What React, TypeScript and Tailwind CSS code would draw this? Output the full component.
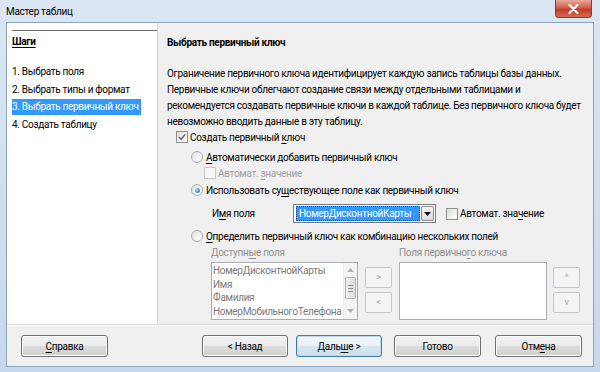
import React from 'react';

const U = ({ children }: { children: React.ReactNode }) => <span className="underline underline-offset-2">{children}</span>;

const btnBg = 'bg-[linear-gradient(to_bottom,#f2f2f2_0%,#ebebeb_50%,#dddddd_50%,#cfcfcf_100%)]';

const Checkbox = ({ checked, disabled }: { checked?: boolean; disabled?: boolean }) => (
    <span
        className={`flex w-[12px] h-[12px] shrink-0 items-center justify-center border ${disabled ? 'border-[#c8c8c8] bg-[#f6f6f6]' : 'border-[#8e8f8f] bg-[linear-gradient(135deg,#dcdcdc,#ffffff)]'}`}
    >
        {checked && (
            <svg width="8" height="8" viewBox="0 0 9 9">
                <path d="M1 4.5 L3.5 7 L8 1.5" fill="none" stroke="#5a6470" strokeWidth="1.6" />
            </svg>
        )}
    </span>
);

const Radio = ({ checked }: { checked?: boolean }) => (
    <span className="flex w-[12px] h-[12px] shrink-0 items-center justify-center rounded-full border border-[#a7abb0] bg-[linear-gradient(135deg,#e2e2e2,#ffffff)]">
        {checked && <span className="w-[5px] h-[5px] rounded-full bg-[radial-gradient(circle_at_35%_35%,#a8dbf8,#1d5fa8)]" />}
    </span>
);

const Button = ({ children, w, focused, className = '' }: { children: React.ReactNode; w: string; focused?: boolean; className?: string }) => (
    <div
        className={`${w} h-[22px] flex items-center justify-center rounded-[3px] border ${focused ? 'border-[#3c7fb1] bg-[linear-gradient(to_bottom,#f4f9fd_0%,#e8f2f9_50%,#d7e6f1_50%,#cfe0ec_100%)] shadow-[inset_0_0_0_1px_#b9dcf2]' : `border-[#707070] ${btnBg} shadow-[inset_0_0_0_1px_#fcfcfc]`} ${className}`}
    >
        {children}
    </div>
);

const SmallBtn = ({ children }: { children: React.ReactNode }) => (
    <div className="w-[27px] h-[21px] flex items-center justify-center rounded-[2px] border border-[#c5c8cb] bg-[#f4f4f4] text-[9px] text-[#a8a8a8]">
        {children}
    </div>
);

export default function App() {
    const steps = ['1. Выбрать поля', '2. Выбрать типы и формат', '3. Выбрать первичный ключ', '4. Создать таблицу'];

    return (
        <div
            className="w-[600px] h-[372px] flex flex-col bg-[linear-gradient(to_bottom,#dae6f3,#c6d8ec)] text-[10px] tracking-[-0.3px] text-black overflow-hidden"
            style={{ fontFamily: 'Roboto, "Noto Sans", sans-serif' }}
        >
            {/* title bar */}
            <div className="h-[22px] flex items-start">
                <div className="pl-[6px] pt-[4px] leading-[16px]">Мастер таблиц</div>
                <div className="ml-auto mr-[8px] w-[37px] h-[18px] flex items-center justify-center rounded-b-[4px] border border-t-0 border-[#8a3b32] bg-[linear-gradient(to_bottom,#e9a99a_0%,#d1604c_45%,#c13b28_55%,#d26b4f_100%)]">
                    <svg width="11" height="10" viewBox="0 0 11 10">
                        <path d="M1.5 1 L9.5 9 M9.5 1 L1.5 9" stroke="#ffffff" strokeWidth="2.2" strokeLinecap="round" />
                    </svg>
                </div>
            </div>

            {/* client */}
            <div className="mx-[6px] mb-[5px] flex-1 flex flex-col border border-[#8ea3bd] bg-[#f0f0f0]">
                <div className="h-[302px] flex border-b border-[#dadada]">
                    {/* steps */}
                    <div className="w-[151px] shrink-0 bg-white border-r border-[#d5d5d5] pl-[5px] pt-[7px]">
                        <div className="border-t border-[#6a6a6a]" />
                        <div className="mt-[3px] leading-[16px] font-bold">
                            <span className="underline underline-offset-2">Шаги</span>
                        </div>
                        <div className="mt-[13px] flex flex-col whitespace-nowrap">
                            {steps.map((s, i) => (
                                <div key={s} className="h-[17.7px] flex items-center">
                                    <span className={`leading-[16px] ${i === 2 ? 'bg-[#3399ff] text-white pr-[2px]' : ''}`}>{s}</span>
                                </div>
                            ))}
                        </div>
                    </div>

                    {/* page */}
                    <div className="flex-1 pl-[9px] pt-[12px]">
                        <div className="leading-[16px] font-bold">Выбрать первичный ключ</div>
                        <div className="mt-[15px] leading-[16px] whitespace-nowrap">
                            Ограничение первичного ключа идентифицирует каждую запись таблицы базы данных.<br />
                            Первичные ключи облегчают создание связи между отдельными таблицами и<br />
                            рекомендуется создавать первичные ключи в каждой таблице. Без первичного ключа будет<br />
                            невозможно вводить данные в эту таблицу.
                        </div>

                        <div className="mt-[-1px] pl-[9px] h-[16px] flex items-center gap-[2px]">
                            <Checkbox checked />
                            <span>Создать первичный <U>к</U>люч</span>
                        </div>
                        <div className="mt-[4px] pl-[24px] h-[16px] flex items-center gap-[3px]">
                            <Radio />
                            <span><U>А</U>втоматически добавить первичный ключ</span>
                        </div>
                        <div className="pl-[37px] h-[16px] flex items-center gap-[2px] text-[#a0a0a0]">
                            <Checkbox disabled />
                            <span>Автомат. <U>з</U>начение</span>
                        </div>
                        <div className="mt-[1px] pl-[24px] h-[16px] flex items-center gap-[3px]">
                            <Radio checked />
                            <span>Использовать су<U>щ</U>ествующее поле как первичный ключ</span>
                        </div>
                        <div className="mt-[6px] pl-[45px] h-[19px] flex items-center">
                            <span className="w-[81px]">И<U>м</U>я поля</span>
                            <div className="w-[143px] h-[19px] flex items-center border border-[#7a7a7a] bg-white pl-[2px] pr-[1px]">
                                <div className="flex-1 h-[15px] flex items-center bg-[#3399ff] text-white pl-[3px] outline outline-1 outline-dotted outline-[#1a4f8a] -outline-offset-1">
                                    НомерДисконтнойКарты
                                </div>
                                <div className="ml-[1px] w-[13px] h-[15px] flex items-center justify-center border border-[#8a8a8a] rounded-[2px] bg-[linear-gradient(to_bottom,#f4f4f4,#dcdcdc)]">
                                    <svg width="7" height="4" viewBox="0 0 7 4">
                                        <path d="M0 0 H7 L3.5 4 Z" fill="#000" />
                                    </svg>
                                </div>
                            </div>
                            <div className="ml-[10px] flex items-center gap-[2px]">
                                <Checkbox />
                                <span>Автомат. зна<U>ч</U>ение</span>
                            </div>
                        </div>
                        <div className="mt-[5px] pl-[24px] h-[16px] flex items-center gap-[3px]">
                            <Radio />
                            <span><U>О</U>пределить первичный ключ как комбинацию нескольких полей</span>
                        </div>

                        <div className="mt-[1px] pl-[44px] flex text-[#8f8f8f]">
                            <div className="flex flex-col">
                                <div className="h-[16px] leading-[16px]">Доступн<U>ы</U>е поля</div>
                                <div className="mt-[1px] flex">
                                    <div className="w-[147px] h-[58px] flex border border-[#a9adb3] bg-white">
                                        <div className="flex-1 pl-[1px] pt-[1px] leading-[13.7px] text-[#7a7a7a] overflow-hidden whitespace-nowrap">
                                            <div>НомерДисконтнойКарты</div>
                                            <div>Имя</div>
                                            <div>Фамилия</div>
                                            <div>НомерМобильногоТелефона</div>
                                        </div>
                                        <div className="w-[14px] flex flex-col items-center bg-[#f4f4f4] border-l border-[#ececec]">
                                            <svg width="7" height="4" viewBox="0 0 7 4" className="mt-[5px]">
                                                <path d="M0 4 H7 L3.5 0 Z" fill="#b0b0b0" />
                                            </svg>
                                            <div className="mt-[5px] w-[11px] h-[22px] flex flex-col items-center justify-center gap-[2px] rounded-[2px] border border-[#b4b4b4] bg-[linear-gradient(to_right,#f0f0f0,#dcdcdc)]">
                                                <span className="w-[5px] h-px bg-[#8a8a8a]" />
                                                <span className="w-[5px] h-px bg-[#8a8a8a]" />
                                                <span className="w-[5px] h-px bg-[#8a8a8a]" />
                                            </div>
                                            <svg width="7" height="4" viewBox="0 0 7 4" className="mt-[10px]">
                                                <path d="M0 0 H7 L3.5 4 Z" fill="#b0b0b0" />
                                            </svg>
                                        </div>
                                    </div>
                                    <div className="ml-[7px] pt-[5px] flex flex-col gap-[4px]">
                                        <SmallBtn>&gt;</SmallBtn>
                                        <SmallBtn>&lt;</SmallBtn>
                                    </div>
                                </div>
                            </div>
                            <div className="ml-[7px] flex flex-col">
                                <div className="h-[16px] leading-[16px]">Поля первично<U>г</U>о ключа</div>
                                <div className="mt-[1px] flex">
                                    <div className="w-[148px] h-[58px] border border-[#a9adb3] bg-white" />
                                    <div className="ml-[6px] pt-[5px] flex flex-col gap-[4px]">
                                        <SmallBtn>^</SmallBtn>
                                        <SmallBtn>v</SmallBtn>
                                    </div>
                                </div>
                            </div>
                        </div>
                    </div>
                </div>

                {/* buttons */}
                <div className="flex-1 flex items-start pt-[9px] border-t border-white">
                    <Button w="w-[87px]" className="ml-[14px]"><span><U>С</U>правка</span></Button>
                    <Button w="w-[86px]" className="ml-[94px]">&lt; Назад</Button>
                    <Button w="w-[86px]" className="ml-[8px]" focused><span>Даль<U>ш</U>е &gt;</span></Button>
                    <Button w="w-[87px]" className="ml-[12px]">Готово</Button>
                    <Button w="w-[87px]" className="ml-[14px]"><span>Отм<U>е</U>на</span></Button>
                </div>
            </div>
        </div>
    );
}
